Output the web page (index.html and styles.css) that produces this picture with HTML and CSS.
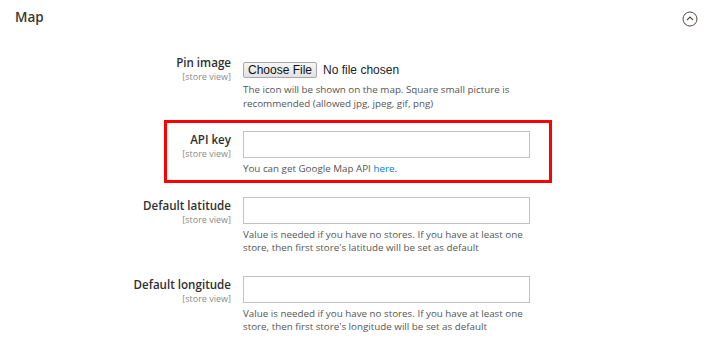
FILE: index.html
```html
<!DOCTYPE html>
<html lang="en">
<head>
    <meta charset="UTF-8">
    <meta name="viewport" content="width=device-width, initial-scale=1.0">
    <title>Map settings</title>
    <link rel="stylesheet" href="styles.css">
</head>
<body>
<div class="section">
    <div class="section-head">
        <span class="section-title">Map</span>
        <svg class="collapse" width="16" height="16" viewBox="0 0 16 16">
            <circle cx="8" cy="8" r="7" fill="none" stroke="#514943" stroke-width="1"/>
            <polyline points="5,9 8,6 11,9" fill="none" stroke="#514943" stroke-width="1.1"/>
        </svg>
    </div>

    <div class="field field-file">
        <div class="label">
            <span class="label-text">Pin image</span>
            <span class="scope">[store view]</span>
        </div>
        <div class="control">
            <input type="file" class="file-input">
            <p class="note">The icon will be shown on the map. Square small picture is recommended (allowed jpg, jpeg, gif, png)</p>
        </div>
    </div>

    <div class="field marked">
        <div class="label">
            <span class="label-text">API key</span>
            <span class="scope">[store view]</span>
        </div>
        <div class="control">
            <input type="text" class="text-input">
            <p class="note">You can get Google Map API <a href="#">here</a>.</p>
        </div>
    </div>

    <div class="field">
        <div class="label">
            <span class="label-text">Default latitude</span>
            <span class="scope">[store view]</span>
        </div>
        <div class="control">
            <input type="text" class="text-input">
            <p class="note">Value is needed if you have no stores. If you have at least one store, then first store's latitude will be set as default</p>
        </div>
    </div>

    <div class="field">
        <div class="label">
            <span class="label-text">Default longitude</span>
            <span class="scope">[store view]</span>
        </div>
        <div class="control">
            <input type="text" class="text-input">
            <p class="note">Value is needed if you have no stores. If you have at least one store, then first store's longitude will be set as default</p>
        </div>
    </div>
</div>
</body>
</html>
```

FILE: styles.css
```css
body { margin:0; background:#fff; font-family:"Open Sans", Arial, sans-serif; color:#303030; }
.section { padding:7px 12px 0 15px; }
.section-head { display:flex; justify-content:space-between; align-items:center; height:20px; margin-bottom:27px; }
.section-title { font-size:13.5px; font-weight:600; color:#41362f; line-height:18px; }
.collapse { display:block; margin-top:3px; }

.field { display:grid; grid-template-columns:216px 287px; column-gap:12px; margin-bottom:21px; position:relative; }
.label { display:flex; flex-direction:column; align-items:flex-end; text-align:right; padding-top:1px; }
.label-text { font-size:11.6px; font-weight:600; line-height:16px; color:#303030; }
.scope { font-size:9px; line-height:11px; color:#8a8a8a; }
.control { display:flex; flex-direction:column; align-items:flex-start; }

.text-input { width:287px; height:27px; box-sizing:border-box; border:1px solid #c2c2c2; background:#fff; margin:0; padding:0 6px; }
.file-input { font:12px "Liberation Sans", Arial, sans-serif; color:#222; margin:8px 0 0; padding:0; height:16px; }
.file-input::file-selector-button { font:12px "Liberation Sans", Arial, sans-serif; height:16px; padding:0 4px; margin-right:6px; border:1px solid #a6a6a6; border-radius:2px; background:linear-gradient(#f6f6f6, #e2e2e2); color:#111; }

.note { margin:4px 0 0; font-size:9.8px; line-height:13.5px; color:#555; }
.field-file .note { margin-top:5px; }
.note a { color:#007bdb; text-decoration:none; }

.marked::after { content:""; position:absolute; left:149px; top:-11px; width:388px; bottom:-7px; border:3px solid #f00; box-sizing:border-box; pointer-events:none; }
```
